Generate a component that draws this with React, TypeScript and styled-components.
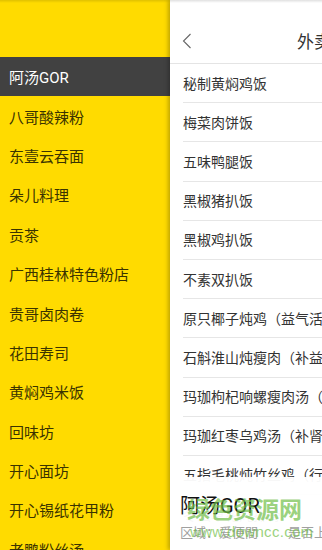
import styled, { createGlobalStyle } from 'styled-components';

const shops = [
  '阿汤GOR',
  '八哥酸辣粉',
  '东壹云吞面',
  '朵儿料理',
  '贡茶',
  '广西桂林特色粉店',
  '贵哥卤肉卷',
  '花田寿司',
  '黄焖鸡米饭',
  '回味坊',
  '开心面坊',
  '开心锡纸花甲粉',
  '老鹏粉丝汤',
];

const dishes = [
  '秘制黄焖鸡饭',
  '梅菜肉饼饭',
  '五味鸭腿饭',
  '黑椒猪扒饭',
  '黑椒鸡扒饭',
  '不素双扒饭',
  '原只椰子炖鸡（益气活血）',
  '石斛淮山炖瘦肉（补益脾胃）',
  '玛珈枸杞响螺瘦肉汤（滋阴）',
  '玛珈红枣乌鸡汤（补肾养血）',
  '五指毛桃炖竹丝鸡（行气）',
  '冬虫草花炖排骨',
];

export default function App() {
  return (
    <>
      <GlobalStyle />
      <Screen>
        <Drawer>
          <DrawerTop />
          {shops.map((name, i) => (
            <ShopItem key={name} $active={i === 0}>
              {name}
            </ShopItem>
          ))}
        </Drawer>
        <Main>
          <Header>
            <BackButton>
              <svg width="10" height="16" viewBox="0 0 10 16">
                <path d="M8.5 1 L1.5 8 L8.5 15" fill="none" stroke="#666" strokeWidth="1.1" />
              </svg>
            </BackButton>
            <Title>外卖订餐</Title>
          </Header>
          <DishList>
            {dishes.map((d) => (
              <DishItem key={d}>{d}</DishItem>
            ))}
          </DishList>
          <InfoPanel>
            <ShopName>阿汤GOR</ShopName>
            <InfoRow>
              <span>区域：爱便間</span>
              <span>是否上架</span>
            </InfoRow>
          </InfoPanel>
          <Watermark>
            <span className="big">绿色资源网</span>
            <span className="small">www.downcc.com</span>
          </Watermark>
        </Main>
      </Screen>
    </>
  );
}

//****************************************************//

const GlobalStyle = createGlobalStyle`
  html, body {
    margin: 0;
    padding: 0;
    background: #fff;
  }
  body {
    font-family: Roboto, "Noto Sans CJK SC", "Noto Sans", sans-serif;
  }
`;

const Screen = styled.div`
  position: relative;
  display: flex;
  width: 322px;
  height: 550px;
  overflow: hidden;

  &:before {
    content: '';
    position: absolute;
    top: 0;
    left: 0;
    right: 0;
    height: 3px;
    background: linear-gradient(rgba(0, 0, 0, 0.12), rgba(0, 0, 0, 0));
    z-index: 5;
  }
`;

const Drawer = styled.div`
  flex: 0 0 170px;
  background: #ffdb00;
  display: flex;
  flex-direction: column;
`;

const DrawerTop = styled.div`
  height: 57px;
  flex-shrink: 0;
`;

const ShopItem = styled.div<{ $active: boolean }>`
  flex-shrink: 0;
  height: 39.4px;
  display: flex;
  align-items: center;
  padding-left: 9px;
  font-size: 15px;
  white-space: nowrap;
  color: ${(p) => (p.$active ? '#ffffff' : '#3a3300')};
  background: ${(p) => (p.$active ? '#414141' : 'transparent')};
`;

const Main = styled.div`
  position: relative;
  flex: 0 0 322px;
  background: #fff;
  box-shadow: -2px 0 4px rgba(0, 0, 0, 0.25);
  display: flex;
  flex-direction: column;
`;

const Header = styled.div`
  position: relative;
  height: 43px;
  padding-top: 20px;
  flex-shrink: 0;
  display: flex;
  align-items: center;
  justify-content: center;
  border-bottom: 1px solid #e4e4e4;
  box-sizing: content-box;
`;

const BackButton = styled.div`
  position: absolute;
  left: 12px;
  top: 33px;
  display: flex;
`;

const Title = styled.div`
  font-size: 17px;
  color: #333;
  margin-top: -2px;
`;

const DishList = styled.div`
  display: flex;
  flex-direction: column;
`;

const DishItem = styled.div`
  flex-shrink: 0;
  height: 39.2px;
  box-sizing: border-box;
  margin-left: 13px;
  padding-bottom: 1px;
  display: flex;
  align-items: center;
  font-size: 14px;
  color: #333;
  white-space: nowrap;
  border-bottom: 1px solid #e6e6e6;
`;

const InfoPanel = styled.div`
  position: absolute;
  left: 0;
  right: 0;
  top: 477px;
  bottom: 0;
  background: rgba(255, 255, 255, 0.96);
  padding: 17px 0 0 10px;
  display: flex;
  flex-direction: column;
  gap: 4px;
`;

const ShopName = styled.div`
  font-size: 20px;
  color: #111;
  line-height: 24px;
`;

const InfoRow = styled.div`
  display: flex;
  gap: 30px;
  font-size: 13px;
  color: #a0a0a0;
  white-space: nowrap;
`;

const Watermark = styled.div`
  position: absolute;
  left: 17px;
  top: 498px;
  display: flex;
  flex-direction: column;
  align-items: flex-start;
  pointer-events: none;
  color: rgba(110, 190, 70, 0.7);

  .big {
    font-size: 23px;
    font-weight: bold;
    line-height: 26px;
  }

  .small {
    font-family: "Liberation Sans", sans-serif;
    font-size: 15px;
    line-height: 16px;
    margin-left: 3px;
    letter-spacing: 0.3px;
  }
`;
